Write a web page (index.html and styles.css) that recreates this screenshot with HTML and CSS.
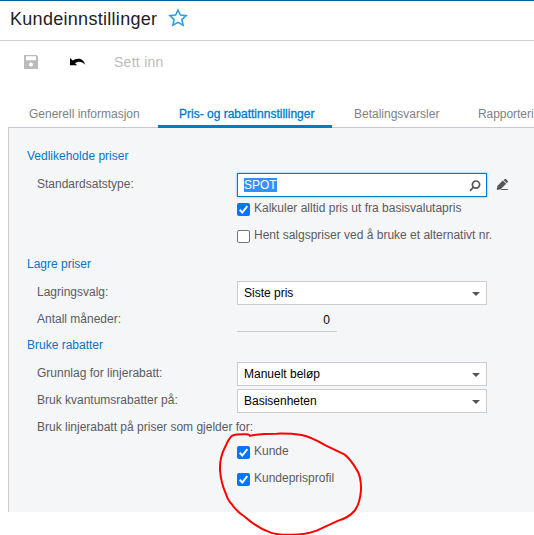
FILE: index.html
```
<!DOCTYPE html>
<html lang="no">
<head>
<meta charset="utf-8">
<title>Kundeinnstillinger</title>
<link rel="stylesheet" href="styles.css">
</head>
<body>
<header class="header">
  <h1>Kundeinnstillinger</h1>
  <svg class="star" width="20" height="20" viewBox="0 0 20 20"><path d="M10 2l2.4 5 5.7.6-4.2 4 1.2 5.7-5.1-2.9-5.1 2.9 1.2-5.7-4.2-4L7.6 7z"/></svg>
</header>
<div class="toolbar">
  <svg class="save" width="14" height="14" viewBox="0 0 14 14"><path fill-rule="evenodd" d="M0 0h12.5L14 1.5V14H0zM2 1.3v4h10v-4zM7 7.6a2 2 0 1 0 0 4 2 2 0 0 0 0-4z"/></svg>
  <svg class="undo" width="16" height="10" viewBox="0 0 16 10"><path d="M0 0v7.3h7.2L5 5.2C7 3.3 11.8 2.4 15.2 6.8 14.2 2.5 11 .6 8.3.7 6 .8 4 1.6 2.8 2.6z"/></svg>
  <span class="insert">Sett inn</span>
</div>
<nav class="tabs">
  <span class="tab">Generell informasjon</span>
  <span class="tab active">Pris- og rabattinnstillinger</span>
  <span class="tab">Betalingsvarsler</span>
  <span class="tab last">Rapporteri</span>
</nav>
<main class="panel">
  <div class="row section">Vedlikeholde priser</div>
  <div class="row">
    <span class="label">Standardsatstype:</span>
    <div class="field focus"><span class="selected">SPOT</span>
      <svg class="search" width="12" height="12" viewBox="0 0 12 12"><circle cx="7" cy="4.6" r="3.6"/><path d="M4.5 7.2L1 10.8"/></svg>
    </div>
    <svg class="edit" width="13" height="12" viewBox="0 0 13 12"><path d="M.7 10.9l.7-4L6.8 1.6l3.3 3.2L4.7 10.2zM7.6 1L8.8 0q.7-.4 1.3.2l1.7 1.7q.5.6 0 1.2l-1 1.1zM5.6 9.9h6.2v1.1H4.6z"/></svg>
  </div>
  <div class="row"><span class="label"></span><span class="check on"><svg viewBox="0 0 13 13"><path d="M2.7 6.8l2.6 2.7 5-6.3"/></svg></span><span class="caption">Kalkuler alltid pris ut fra basisvalutapris</span></div>
  <div class="row"><span class="label"></span><span class="check"></span><span class="caption">Hent salgspriser ved å bruke et alternativt nr.</span></div>
  <div class="row section">Lagre priser</div>
  <div class="row"><span class="label">Lagringsvalg:</span><div class="field"><span>Siste pris</span><i class="arrow"></i></div></div>
  <div class="row"><span class="label">Antall måneder:</span><div class="number">0</div></div>
  <div class="row section">Bruke rabatter</div>
  <div class="row"><span class="label">Grunnlag for linjerabatt:</span><div class="field"><span>Manuelt beløp</span><i class="arrow"></i></div></div>
  <div class="row"><span class="label">Bruk kvantumsrabatter på:</span><div class="field"><span>Basisenheten</span><i class="arrow"></i></div></div>
  <div class="row"><span class="label">Bruk linjerabatt på priser som gjelder for:</span></div>
  <div class="row"><span class="label"></span><span class="check on"><svg viewBox="0 0 13 13"><path d="M2.7 6.8l2.6 2.7 5-6.3"/></svg></span><span class="caption">Kunde</span></div>
  <div class="row"><span class="label"></span><span class="check on"><svg viewBox="0 0 13 13"><path d="M2.7 6.8l2.6 2.7 5-6.3"/></svg></span><span class="caption">Kundeprisprofil</span></div>
</main>
<svg class="marking" width="180" height="115" viewBox="0 0 540 345"><path d="M151 50Q150 44 140 43Q108 42 97 47Q88 52 75 82Q59 112 60 150Q63 190 78 222Q84 242 95 252Q108 273 135 291Q174 325 212 338Q235 345 270 344Q315 345 350 332L415 302Q447 292 463 273Q480 252 483 210Q484 170 470 149Q450 115 433 103L378 77Q330 49 305 45Q270 40 230 41Q180 41 151 47"/></svg>
</body>
</html>
```
FILE: styles.css
```
* { box-sizing: border-box; }
body {
  position: relative;
  margin: 0;
  width: 534px;
  height: 535px;
  overflow: hidden;
  background: #fff;
  font: 12px/14px "Liberation Sans", Arial, sans-serif;
  color: #5b5b5f;
}
svg { display: block; flex: none; }
.header {
  display: flex;
  height: 41px;
  padding-left: 10px;
  border-top: 1px solid #00619e;
  border-bottom: 1px solid #d0d0d3;
}
h1 {
  width: 158px;
  margin: 6px 0 0;
  font-size: 18px;
  line-height: 24px;
  font-weight: 400;
  letter-spacing: .29px;
  color: #222;
  white-space: nowrap;
}
.star { margin-top: 7px; fill: none; stroke: #2d9ee0; stroke-width: 1.6; }
.toolbar {
  display: flex;
  height: 60px;
  padding-left: 24px;
}
.save { margin-top: 14px; fill: #bbb; }
.undo { margin: 17px 0 0 32px; fill: #000; }
.insert {
  margin: 12px 0 0 28px;
  font-size: 14px;
  line-height: 18px;
  letter-spacing: .27px;
  color: #bbb;
}
.tabs {
  display: flex;
  height: 26px;
  margin-left: 8px;
}
.tab {
  flex: none;
  padding: 6px 0 0 21px;
  color: #818185;
  width: 150px;
  white-space: nowrap;
}
.tab.active {
  position: relative;
  z-index: 1;
  height: 27px;
  width: 174px;
  border-bottom: 3px solid #007acc;
  color: #007acc;
  -webkit-text-stroke: .3px #007acc;
}
.tab:nth-child(3) { width: 124px; padding-left: 22px; }
.tab.last { width: 78px; padding-left: 22px; letter-spacing: -.05px; }
.panel {
  height: 385px;
  margin-left: 8px;
  padding-top: 18px;
  border: solid #c9c9d0;
  border-width: 1px 0 0 1px;
  background: #f5f6f8;
}
.row {
  display: flex;
  height: 27px;
  padding-left: 28px;
  white-space: nowrap;
}
.section { padding: 3px 0 0 18px; color: #0078c8; }
.label { width: 200px; flex: none; padding-top: 4px; }
.field {
  display: flex;
  justify-content: space-between;
  width: 250px;
  height: 24px;
  padding: 4px 6px;
  border: 1px solid #ccccd0;
  background: #fff;
  color: #000;
}
.focus { border-color: #007acc; box-shadow: 0 0 2px #58b0ec; }
.selected { background: #3390ff; color: #fff; height: 14px; }
.search { margin-top: 2px; margin-right: -1px; fill: none; stroke: #555; stroke-width: 1.7; }
.edit { margin: 6px 0 0 9px; fill: #555; }
.arrow {
  width: 8px;
  height: 4px;
  margin: 6px 0 0 0;
  background: #555;
  clip-path: polygon(0 0, 100% 0, 50% 100%);
}
.check {
  width: 13px;
  height: 13px;
  margin-top: 3px;
  border: 1px solid #767676;
  border-radius: 2px;
  background: #fff;
}
.on { border: 0; background: #0075ff; }
.on path { fill: none; stroke: #fff; stroke-width: 2; }
.caption { margin-left: 4px; padding-top: 1px; }
.number {
  width: 100px;
  height: 24px;
  padding: 5px 7px 0;
  border-bottom: 1px solid #ccccd0;
  text-align: right;
  color: #000;
}
.marking {
  position: absolute;
  left: 200px;
  top: 420px;
  fill: none;
  stroke: #f00;
  stroke-width: 6;
  stroke-linejoin: round;
}
```
